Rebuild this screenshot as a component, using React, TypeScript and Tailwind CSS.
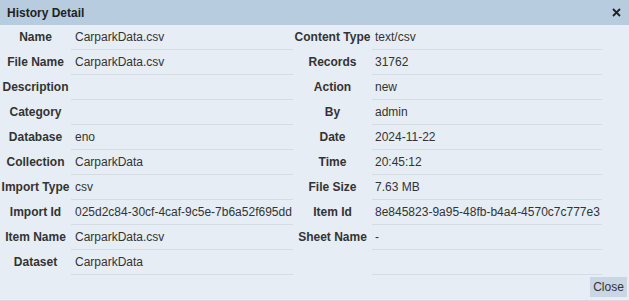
import React from "react";

const rows: [string, string, string, string][] = [
  ["Name", "CarparkData.csv", "Content Type", "text/csv"],
  ["File Name", "CarparkData.csv", "Records", "31762"],
  ["Description", "", "Action", "new"],
  ["Category", "", "By", "admin"],
  ["Database", "eno", "Date", "2024-11-22"],
  ["Collection", "CarparkData", "Time", "20:45:12"],
  ["Import Type", "csv", "File Size", "7.63 MB"],
  ["Import Id", "025d2c84-30cf-4caf-9c5e-7b6a52f695dd", "Item Id", "8e845823-9a95-48fb-b4a4-4570c7c777e3"],
  ["Item Name", "CarparkData.csv", "Sheet Name", "-"],
  ["Dataset", "CarparkData", "", ""],
];

export default function App() {
  return (
    <div
      className="w-[629px] h-[301px] bg-[#e6edf5] flex flex-col text-[12px] text-[#333] border-b border-[#d3dce6]"
      style={{ fontFamily: '"Liberation Sans", Arial, sans-serif' }}
    >
      <div className="h-[25px] bg-[#b8cce0] flex items-center justify-between pl-[7px] pr-[8px] shrink-0">
        <span className="font-bold text-[12px] text-[#222]">History Detail</span>
        <svg width="9" height="9" viewBox="0 0 9 9" className="text-[#222]">
          <path d="M1 1L8 8M8 1L1 8" stroke="currentColor" strokeWidth="1.8" />
        </svg>
      </div>
      <div className="grid grid-cols-[71px_222px_79px_230px] auto-rows-[25px]">
        {rows.map((r, i) => (
          <React.Fragment key={i}>
            <div className="flex items-center justify-center pb-[2px] font-bold whitespace-nowrap">{r[0]}</div>
            <div className="flex items-center pl-[4px] pb-[1px] border-b border-[#d4dce6] whitespace-nowrap">{r[1]}</div>
            <div className="flex items-center justify-center pb-[2px] font-bold whitespace-nowrap">{r[2]}</div>
            <div className="flex items-center pl-[3px] pb-[1px] border-b border-[#d4dce6] whitespace-nowrap">{r[3]}</div>
          </React.Fragment>
        ))}
      </div>
      <div className="flex justify-end pr-[2px] mt-[2px]">
        <button className="h-[20px] w-[37px] bg-[#c9d6e3] text-[12px] text-[#333] flex items-center justify-center">
          Close
        </button>
      </div>
    </div>
  );
}
